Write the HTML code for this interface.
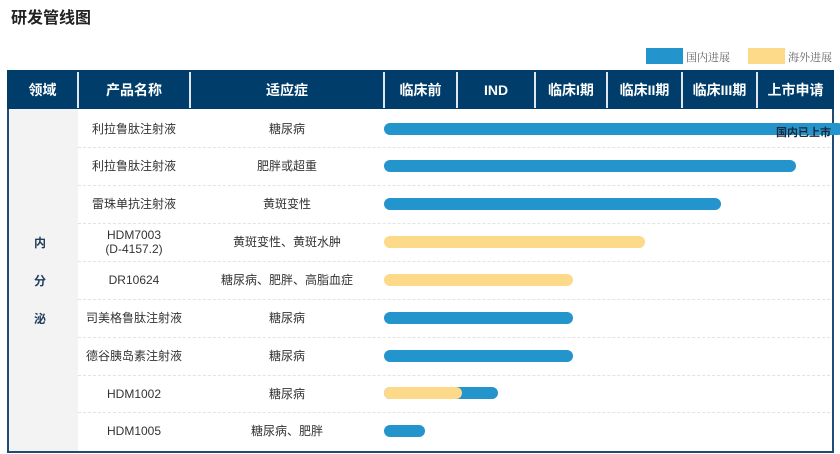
<!DOCTYPE html>
<html><head><meta charset="utf-8"><style>
body{margin:0;width:840px;height:454px;background:#fff;position:relative;overflow:hidden;font-family:"Liberation Sans","Noto Sans CJK SC",sans-serif;}
.a{position:absolute}
.h{position:absolute;top:70px;height:39px;background:#003d6b;color:#fff;font-weight:bold;font-size:14px;display:flex;align-items:center;justify-content:center;}
.sep{position:absolute;top:72px;height:36px;width:2px;background:#dfe6ee}
.c{position:absolute;font-size:12px;color:#333;text-align:center;line-height:14px}
.bar{position:absolute;height:12px;border-radius:6px;background:#2394cc}
.y{background:#fdd98a}
.dl{position:absolute;left:78px;width:752px;border-top:1px dashed #e3e3e3}
</style></head><body>
<div class="a" style="left:11px;top:4px;font-size:16px;font-weight:bold;color:#222">研发管线图</div>
<div class="a" style="left:646px;top:48px;width:37px;height:16px;background:#2394cc"></div>
<div class="a" style="left:686px;top:49px;font-size:11px;color:#666;font-family:'Noto Serif CJK SC',serif">国内进展</div>
<div class="a" style="left:748px;top:48px;width:37px;height:16px;background:#fdd98a"></div>
<div class="a" style="left:788px;top:49px;font-size:11px;color:#666;font-family:'Noto Serif CJK SC',serif">海外进展</div>
<div class="a" style="left:7px;top:70px;width:823px;height:381px;border:2px solid #1f4c75;border-top:none"></div>
<div class="h" style="left:7px;width:827px"></div>
<div class="h" style="left:7px;width:71px">领域</div>
<div class="h" style="left:78px;width:112px">产品名称</div>
<div class="h" style="left:190px;width:194px">适应症</div>
<div class="h" style="left:384px;width:73px">临床前</div>
<div class="h" style="left:457px;width:78px">IND</div>
<div class="h" style="left:535px;width:72px">临床I期</div>
<div class="h" style="left:607px;width:75px">临床II期</div>
<div class="h" style="left:682px;width:75px">临床III期</div>
<div class="h" style="left:757px;width:77px">上市申请</div>
<div class="sep" style="left:77px"></div><div class="sep" style="left:189px"></div><div class="sep" style="left:383px"></div><div class="sep" style="left:456px"></div><div class="sep" style="left:534px"></div><div class="sep" style="left:606px"></div><div class="sep" style="left:681px"></div><div class="sep" style="left:756px"></div>
<div class="a" style="left:9px;top:109px;width:69px;height:342px;background:#f3f3f3"></div>
<div class="a" style="left:34px;top:224px;font-size:12px;font-weight:bold;color:#1f3c5a;line-height:38px">内<br>分<br>泌</div>
<div class="dl" style="top:147px"></div><div class="dl" style="top:185px"></div><div class="dl" style="top:223px"></div><div class="dl" style="top:261px"></div><div class="dl" style="top:299px"></div><div class="dl" style="top:337px"></div><div class="dl" style="top:375px"></div><div class="dl" style="top:412px"></div>
<div class="c" style="left:78px;width:112px;top:122px">利拉鲁肽注射液</div><div class="c" style="left:190px;width:194px;top:122px">糖尿病</div>
<div class="c" style="left:78px;width:112px;top:159px">利拉鲁肽注射液</div><div class="c" style="left:190px;width:194px;top:159px">肥胖或超重</div>
<div class="c" style="left:78px;width:112px;top:197px">雷珠单抗注射液</div><div class="c" style="left:190px;width:194px;top:197px">黄斑变性</div>
<div class="c" style="left:78px;width:112px;top:228px">HDM7003<br>(D-4157.2)</div><div class="c" style="left:190px;width:194px;top:235px">黄斑变性、黄斑水肿</div>
<div class="c" style="left:78px;width:112px;top:273px">DR10624</div><div class="c" style="left:190px;width:194px;top:273px">糖尿病、肥胖、高脂血症</div>
<div class="c" style="left:78px;width:112px;top:311px">司美格鲁肽注射液</div><div class="c" style="left:190px;width:194px;top:311px">糖尿病</div>
<div class="c" style="left:78px;width:112px;top:349px">德谷胰岛素注射液</div><div class="c" style="left:190px;width:194px;top:349px">糖尿病</div>
<div class="c" style="left:78px;width:112px;top:387px">HDM1002</div><div class="c" style="left:190px;width:194px;top:387px">糖尿病</div>
<div class="c" style="left:78px;width:112px;top:424px">HDM1005</div><div class="c" style="left:190px;width:194px;top:424px">糖尿病、肥胖</div>
<div class="bar" style="left:384px;top:123px;width:460px"></div>
<div class="a" style="left:776px;top:124px;font-size:11px;font-weight:bold;color:#1a2a3a">国内已上市</div>
<div class="bar" style="left:384px;top:160px;width:412px"></div>
<div class="bar" style="left:384px;top:198px;width:337px"></div>
<div class="bar y" style="left:384px;top:236px;width:261px"></div>
<div class="bar y" style="left:384px;top:274px;width:189px"></div>
<div class="bar" style="left:384px;top:312px;width:189px"></div>
<div class="bar" style="left:384px;top:350px;width:189px"></div>
<div class="bar" style="left:384px;top:387px;width:114px"></div>
<div class="bar y" style="left:384px;top:387px;width:78px"></div>
<div class="bar" style="left:384px;top:425px;width:41px"></div>
</body></html>
